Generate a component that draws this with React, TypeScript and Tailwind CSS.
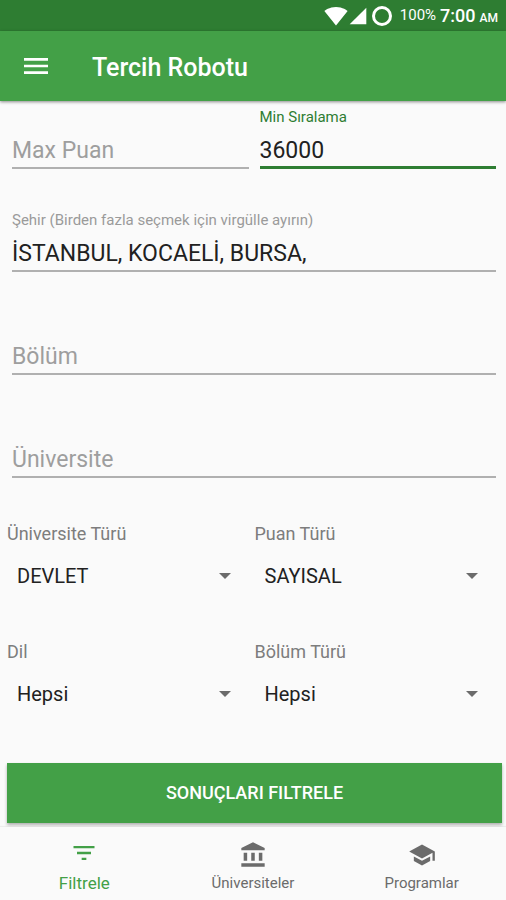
import { useId, type ReactNode } from 'react';
import {
  MdAccountBalance,
  MdFilterList,
  MdMenu,
  MdSchool,
  MdSignalCellular4Bar,
  MdSignalWifi4Bar,
} from 'react-icons/md';

function StatusBar() {
  return (
    <div className="flex h-[31px] items-center justify-end bg-[#2e7d32] pr-2 text-white">
      <MdSignalWifi4Bar className="size-6" />
      <MdSignalCellular4Bar className="size-5" />
      <span className="ml-1 size-5 rounded-full border-3 border-white" />
      <span className="ml-2 text-[15px]">100%</span>
      <span className="ml-1 text-lg font-medium">7:00</span>
      <span className="ml-1 pt-1 text-xs font-medium">AM</span>
    </div>
  );
}

type FieldProps = { label: string; value?: string; active?: boolean };

function Field({ label, value, active }: FieldProps) {
  const id = useId();
  const labelColor = active ? 'text-[#2e7d32]' : 'text-[#9a9a9a]';
  const line = active ? 'border-b-3 border-[#2e7d32]' : 'border-b-2 border-[#b0b0b0]';
  return (
    <div className="min-w-0 flex-1">
      <label
        htmlFor={id}
        className={`block h-[18px] text-[15px] leading-[18px] ${labelColor} ${value ? '' : 'opacity-0'}`}
      >
        {label}
      </label>
      <input
        id={id}
        type="text"
        defaultValue={value}
        placeholder={label}
        className={`block h-[43px] w-full bg-transparent pt-2 text-[23px] text-[#212121] outline-none placeholder:text-[#9e9e9e] ${line}`}
      />
    </div>
  );
}

function Spinner({ label, options }: { label: string; options: string[] }) {
  const id = useId();
  return (
    <div className="min-w-0 flex-1">
      <label htmlFor={id} className="block text-lg leading-6 text-[#7d7d7d]">
        {label}
      </label>
      <div className="relative mt-2">
        <select
          id={id}
          className="block h-11 w-full appearance-none bg-transparent pl-[10px] text-xl text-[#212121] outline-none"
        >
          {options.map((option) => (
            <option key={option}>{option}</option>
          ))}
        </select>
        <svg
          viewBox="0 0 12 6"
          className="pointer-events-none absolute top-[19px] right-6 h-[6px] w-3 fill-[#6b6b6b]"
        >
          <path d="M0 0h12L6 6z" />
        </svg>
      </div>
    </div>
  );
}

function NavItem({ icon, label, active }: { icon: ReactNode; label: string; active?: boolean }) {
  const style = active ? 'text-[#43a047] text-[17px]' : 'text-[#6b6b6b] text-[15px]';
  return (
    <button type="button" className={`flex flex-1 flex-col items-center pt-3 ${style}`}>
      <span className="flex h-8 items-center">{icon}</span>
      <span className="leading-6">{label}</span>
    </button>
  );
}

export default function App() {
  return (
    <div
      lang="tr"
      className="flex min-h-screen flex-col bg-[#fafafa] font-['Roboto','Liberation_Sans',sans-serif]"
    >
      <StatusBar />
      <header className="flex h-[70px] items-center bg-[#43a047] pt-1 pl-5 text-white shadow-[0_1px_3px_rgba(0,0,0,0.45)]">
        <button type="button" aria-label="Menü" className="pb-1">
          <MdMenu className="size-8" />
        </button>
        <h1 className="ml-10 text-[25px] font-medium">Tercih Robotu</h1>
      </header>

      <main className="flex-1">
        <form className="pt-[7px]">
          <div className="flex flex-col gap-[42px] pr-[10px] pl-3">
            <div className="flex gap-[11px]">
              <Field label="Max Puan" />
              <Field label="Min Sıralama" value="36000" active />
            </div>
            <Field label="Şehir (Birden fazla seçmek için virgülle ayırın)" value="İSTANBUL, KOCAELİ, BURSA," />
            <Field label="Bölüm" />
            <Field label="Üniversite" />
          </div>

          <div className="mt-11 flex flex-col gap-[42px] pr-1 pl-[7px]">
            <div className="flex">
              <Spinner label="Üniversite Türü" options={['DEVLET', 'VAKIF', 'Hepsi']} />
              <Spinner label="Puan Türü" options={['SAYISAL', 'SÖZEL', 'Hepsi']} />
            </div>
            <div className="flex">
              <Spinner label="Dil" options={['Hepsi', 'Türkçe', 'İngilizce']} />
              <Spinner label="Bölüm Türü" options={['Hepsi', 'Lisans', 'Önlisans']} />
            </div>
          </div>

          <div className="mt-[47px] pr-1 pl-[7px]">
            <button
              type="button"
              className="block h-[60px] w-full bg-[#43a047] text-lg font-medium text-white shadow-[0_2px_3px_rgba(0,0,0,0.3)]"
            >
              SONUÇLARI FILTRELE
            </button>
          </div>
        </form>
      </main>

      <nav className="relative flex h-[73px] bg-[#fafafa] shadow-[0_-1px_1px_rgba(0,0,0,0.05)]">
        <NavItem icon={<MdFilterList className="size-8 pb-1" />} label="Filtrele" active />
        <NavItem icon={<MdAccountBalance className="size-7" />} label="Üniversiteler" />
        <NavItem icon={<MdSchool className="size-7" />} label="Programlar" />
      </nav>
    </div>
  );
}
